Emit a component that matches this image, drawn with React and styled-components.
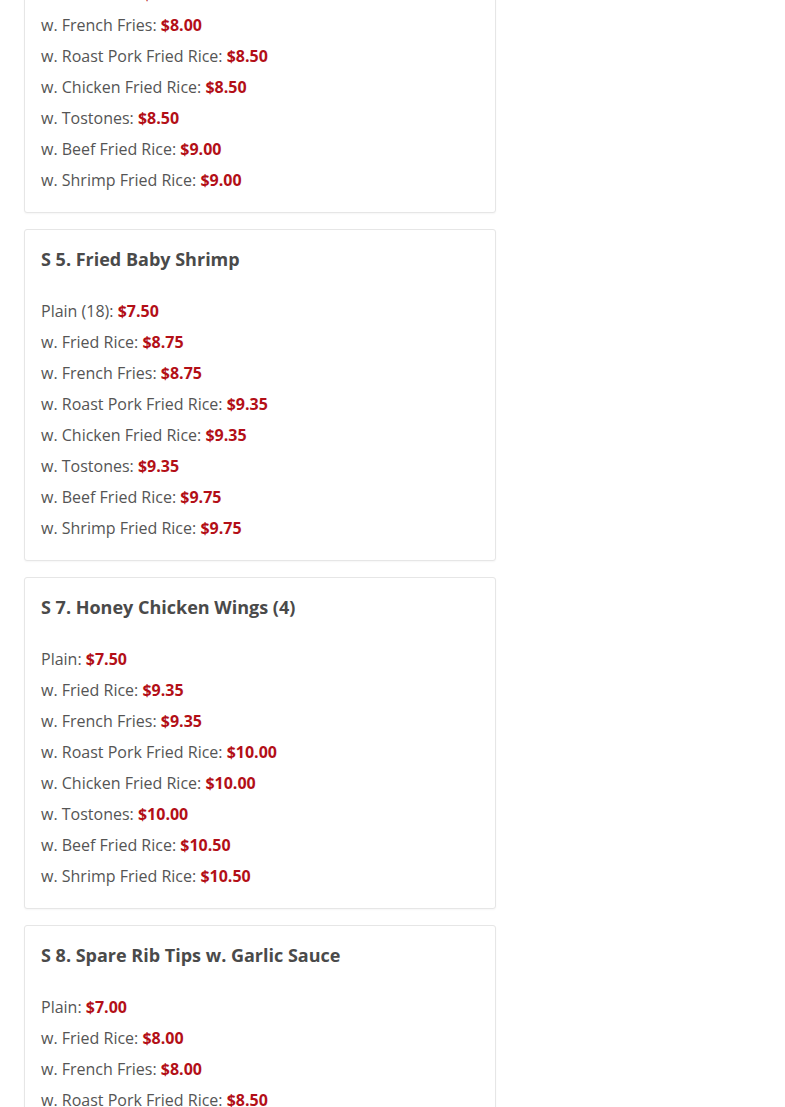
import React from 'react'
import styled, { createGlobalStyle } from 'styled-components'

const GlobalStyle = createGlobalStyle`
  html, body {
    margin: 0;
    padding: 0;
    background: #fff;
    overflow: hidden;
  }
  body {
    font-family: 'Open Sans', 'Liberation Sans', sans-serif;
  }
`

const Page = styled.div`
  padding: 0 24px;
  height: 1107px;
  overflow: hidden;
`

// the page is scrolled; the first card begins above the viewport
const List = styled.div`
  margin-top: -119px;
  display: flex;
  flex-direction: column;
  gap: 16px;
`

const Card = styled.div`
  width: 472px;
  box-sizing: border-box;
  border: 1px solid #e6e6e6;
  border-radius: 3px;
  box-shadow: 0 1px 2px rgba(0, 0, 0, 0.04);
  padding: 16px;
  background: #fff;
`

const Title = styled.h3`
  margin: 0 0 24px;
  font-size: 18px;
  line-height: 26px;
  font-weight: 700;
  color: #4a4a4a;
`

const Item = styled.div`
  font-size: 16px;
  line-height: 31px;
  color: #555;
`

const Price = styled.span`
  color: #b30f17;
  font-weight: 700;
`

const menu = [
  {
    title: 'S 4. Chicken Wings (4)',
    items: [
      ['Plain', '$7.00'],
      ['w. Fried Rice', '$8.00'],
      ['w. French Fries', '$8.00'],
      ['w. Roast Pork Fried Rice', '$8.50'],
      ['w. Chicken Fried Rice', '$8.50'],
      ['w. Tostones', '$8.50'],
      ['w. Beef Fried Rice', '$9.00'],
      ['w. Shrimp Fried Rice', '$9.00'],
    ],
  },
  {
    title: 'S 5. Fried Baby Shrimp',
    items: [
      ['Plain (18)', '$7.50'],
      ['w. Fried Rice', '$8.75'],
      ['w. French Fries', '$8.75'],
      ['w. Roast Pork Fried Rice', '$9.35'],
      ['w. Chicken Fried Rice', '$9.35'],
      ['w. Tostones', '$9.35'],
      ['w. Beef Fried Rice', '$9.75'],
      ['w. Shrimp Fried Rice', '$9.75'],
    ],
  },
  {
    title: 'S 7. Honey Chicken Wings (4)',
    items: [
      ['Plain', '$7.50'],
      ['w. Fried Rice', '$9.35'],
      ['w. French Fries', '$9.35'],
      ['w. Roast Pork Fried Rice', '$10.00'],
      ['w. Chicken Fried Rice', '$10.00'],
      ['w. Tostones', '$10.00'],
      ['w. Beef Fried Rice', '$10.50'],
      ['w. Shrimp Fried Rice', '$10.50'],
    ],
  },
  {
    title: 'S 8. Spare Rib Tips w. Garlic Sauce',
    items: [
      ['Plain', '$7.00'],
      ['w. Fried Rice', '$8.00'],
      ['w. French Fries', '$8.00'],
      ['w. Roast Pork Fried Rice', '$8.50'],
      ['w. Chicken Fried Rice', '$8.50'],
      ['w. Tostones', '$8.50'],
      ['w. Beef Fried Rice', '$9.00'],
      ['w. Shrimp Fried Rice', '$9.00'],
    ],
  },
]

const App = () => {
  return (
    <Page>
      <GlobalStyle />
      <List>
        {menu.map((dish) => (
          <Card key={dish.title}>
            <Title>{dish.title}</Title>
            {dish.items.map(([label, price]) => (
              <Item key={label}>
                {label}: <Price>{price}</Price>
              </Item>
            ))}
          </Card>
        ))}
      </List>
    </Page>
  )
}

export default App
